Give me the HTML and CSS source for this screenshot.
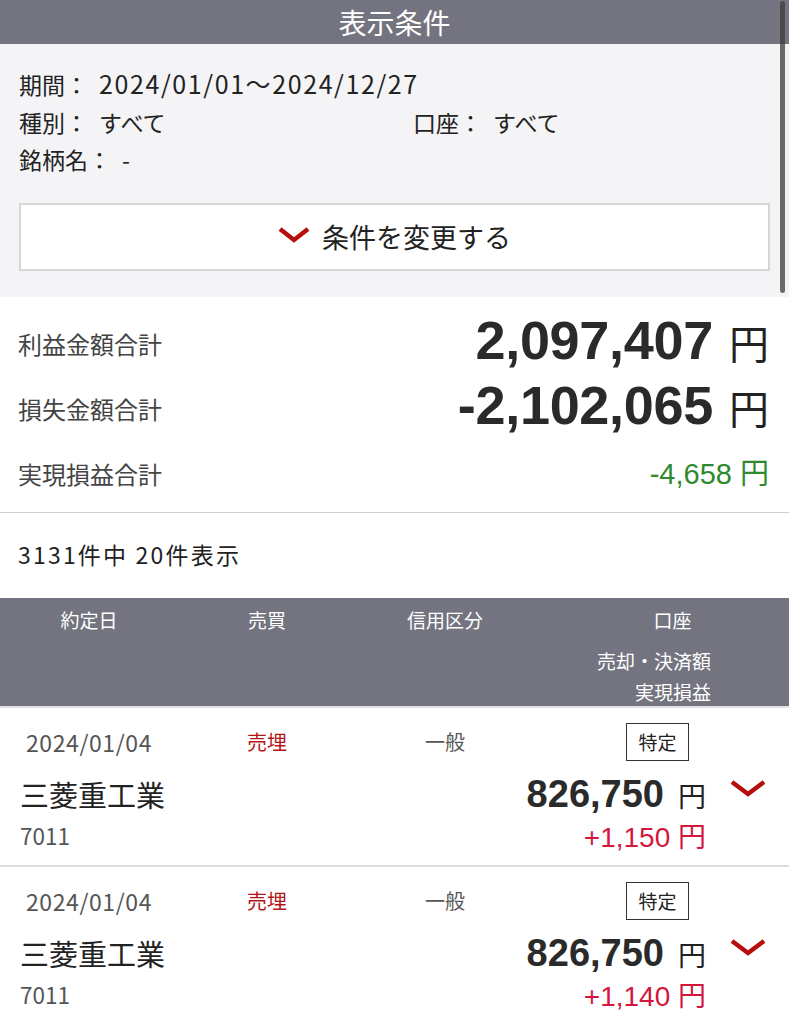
FILE: index.html
```html
<!DOCTYPE html>
<html lang="ja">
<head>
    <meta charset="UTF-8">
    <meta name="viewport" content="width=device-width, initial-scale=1.0">
    <title>実現損益</title>
    <link rel="stylesheet" href="styles.css">
</head>
<body>
    <div class="page">
        <div class="title-bar">表示条件</div>

        <div class="conditions">
            <div class="cond-grid">
                <div class="cond full"><span class="cond-label">期間：</span><span class="cond-value num">2024/01/01〜2024/12/27</span></div>
                <div class="cond"><span class="cond-label">種別：</span><span class="cond-value">すべて</span></div>
                <div class="cond"><span class="cond-label">口座：</span><span class="cond-value">すべて</span></div>
                <div class="cond full"><span class="cond-label">銘柄名：</span><span class="cond-value">-</span></div>
            </div>
            <button class="change-btn">
                <svg class="chevron" width="32" height="16" viewBox="0 0 32 16"><path d="M2 2 L16 13 L30 2" fill="none" stroke="#b80d0d" stroke-width="4.5"/></svg>
                条件を変更する
            </button>
        </div>

        <div class="summary">
            <div class="sum-row">
                <span class="sum-label">利益金額合計</span>
                <span class="sum-value big"><b>2,097,407</b><span class="yen">円</span></span>
            </div>
            <div class="sum-row">
                <span class="sum-label">損失金額合計</span>
                <span class="sum-value big"><b>-2,102,065</b><span class="yen">円</span></span>
            </div>
            <div class="sum-row">
                <span class="sum-label">実現損益合計</span>
                <span class="sum-value total">-4,658 円</span>
            </div>
        </div>

        <div class="count">3131件中 20件表示</div>

        <div class="table-head">
            <div class="head-top">
                <span>約定日</span>
                <span>売買</span>
                <span>信用区分</span>
                <span class="head-account">口座</span>
            </div>
            <div class="head-sub first">売却・決済額</div>
            <div class="head-sub">実現損益</div>
        </div>

        <div class="trade">
            <div class="trade-top">
                <span class="date">2024/01/04</span>
                <span class="side">売埋</span>
                <span class="credit">一般</span>
                <span class="account"><span class="tag">特定</span></span>
            </div>
            <div class="trade-main">
                <div class="trade-left">
                    <div class="name">三菱重工業</div>
                    <div class="code">7011</div>
                </div>
                <div class="trade-right">
                    <div class="amount"><b>826,750</b><span class="yen">円</span></div>
                    <div class="pl">+1,150 円</div>
                </div>
                <div class="trade-toggle">
                    <svg width="36" height="18" viewBox="0 0 36 18"><path d="M2 2 L18 14 L34 2" fill="none" stroke="#b80d0d" stroke-width="4.5"/></svg>
                </div>
            </div>
        </div>

        <div class="trade">
            <div class="trade-top">
                <span class="date">2024/01/04</span>
                <span class="side">売埋</span>
                <span class="credit">一般</span>
                <span class="account"><span class="tag">特定</span></span>
            </div>
            <div class="trade-main">
                <div class="trade-left">
                    <div class="name">三菱重工業</div>
                    <div class="code">7011</div>
                </div>
                <div class="trade-right">
                    <div class="amount"><b>826,750</b><span class="yen">円</span></div>
                    <div class="pl">+1,140 円</div>
                </div>
                <div class="trade-toggle">
                    <svg width="36" height="18" viewBox="0 0 36 18"><path d="M2 2 L18 14 L34 2" fill="none" stroke="#b80d0d" stroke-width="4.5"/></svg>
                </div>
            </div>
        </div>

        <div class="scroll-indicator"></div>
    </div>
</body>
</html>
```

FILE: styles.css
```css
body {
    margin: 0;
    background-color: #fff;
    font-family: "Noto Sans CJK JP", "Noto Sans", sans-serif;
    color: #222;
}
.page {
    position: relative;
    width: 789px;
}
.title-bar {
    height: 44px;
    line-height: 44px;
    background-color: #737480;
    color: #fff;
    font-size: 28px;
    text-align: center;
}
.conditions {
    background-color: #f4f4f6;
    padding: 21px 19px 26px 19px;
}
.cond-grid {
    display: grid;
    grid-template-columns: 394px 1fr;
    font-size: 23px;
    line-height: 37.5px;
}
.cond.full {
    grid-column: 1 / 3;
}
.cond-value {
    margin-left: 11px;
}
.cond-value.num {
    font-size: 25px;
    letter-spacing: 1.6px;
}
.change-btn {
    display: flex;
    justify-content: center;
    align-items: center;
    gap: 12px;
    width: 100%;
    height: 68px;
    margin-top: 24px;
    background-color: #fff;
    border: 2px solid #d6d6d8;
    font-family: inherit;
    font-size: 27px;
    color: #222;
    padding: 0;
}
.chevron {
    margin-top: -4px;
}
.summary {
    padding: 11px 20px 9px 18px;
    border-bottom: 1px solid #cfcfcf;
}
.sum-row {
    display: flex;
    justify-content: space-between;
    align-items: center;
    height: 65px;
}
.sum-label {
    font-size: 24px;
    color: #444;
    padding-top: 6px;
}
.sum-value {
    font-family: "Liberation Sans", "Noto Sans CJK JP", sans-serif;
}
.sum-value.big b {
    font-size: 54px;
    color: #2a2a2a;
    letter-spacing: -0.3px;
}
.sum-value.big .yen {
    font-family: "Noto Sans CJK JP", sans-serif;
    font-size: 40px;
    margin-left: 16px;
}
.sum-value.total {
    font-size: 29px;
    color: #2f8a2f;
    padding-top: 2px;
}
.count {
    padding: 25px 18px 28px;
    font-size: 23px;
    line-height: 32px;
    letter-spacing: 2.2px;
}
.table-head {
    background-color: #737480;
    color: #fff;
    font-size: 19px;
    height: 110px;
    border-bottom: 2px solid #e2e2e4;
    box-sizing: border-box;
}
.head-top {
    display: grid;
    grid-template-columns: 178px 178px 178px 1fr;
    text-align: center;
    padding-top: 8px;
    line-height: 28px;
}
.head-account {
    padding-left: 22px;
}
.head-sub {
    text-align: right;
    padding-right: 78px;
    line-height: 31px;
}
.head-sub.first {
    margin-top: 11px;
}
.trade {
    border-bottom: 2px solid #dcdcdc;
    padding: 15px 0 10px;
}
.trade-top {
    display: grid;
    grid-template-columns: 178px 178px 178px 1fr;
    align-items: center;
    text-align: center;
    height: 38px;
    font-size: 20px;
}
.date {
    color: #555;
    font-size: 23px;
    letter-spacing: 0.6px;
}
.side {
    color: #b3161a;
}
.credit {
    color: #555;
}
.account {
    display: flex;
    padding-left: 92px;
}
.tag {
    width: 61px;
    height: 36px;
    line-height: 36px;
    border: 1px solid #333;
    text-align: center;
    font-size: 19px;
    color: #222;
}
.trade-main {
    display: flex;
    margin-top: 12px;
}
.trade-left {
    flex: 1;
    padding-left: 20px;
}
.name {
    font-size: 29px;
    line-height: 42px;
}
.code {
    font-size: 22.5px;
    line-height: 40px;
    color: #555;
}
.trade-right {
    text-align: right;
    font-family: "Liberation Sans", "Noto Sans CJK JP", sans-serif;
}
.amount {
    line-height: 42px;
}
.amount b {
    font-size: 38px;
    color: #2a2a2a;
}
.amount .yen {
    font-family: "Noto Sans CJK JP", sans-serif;
    font-size: 28px;
    margin-left: 14px;
}
.pl {
    font-size: 28px;
    line-height: 30px;
    color: #d4173c;
}
.trade-toggle {
    width: 83px;
    padding-left: 24px;
    box-sizing: border-box;
    padding-top: 6px;
}
.scroll-indicator {
    position: absolute;
    top: 1px;
    right: 4px;
    width: 5px;
    height: 292px;
    border-radius: 3px;
    background-color: rgba(60, 60, 60, 0.75);
}
```
